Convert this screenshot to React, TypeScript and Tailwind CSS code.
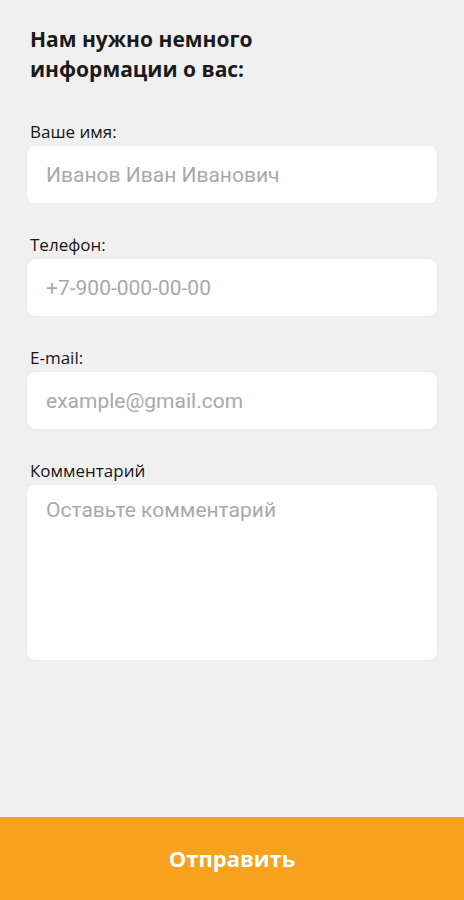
import { ReactNode } from "react";

function Field({ label, children }: { label: string; children: ReactNode }) {
  return (
    <div className="flex flex-col">
      <label className="pl-[3px] text-[17px] leading-[20px] font-medium text-[#161616] mb-[4px]">{label}</label>
      {children}
    </div>
  );
}

const inputCls =
  "w-full h-[57px] rounded-[8px] bg-white px-[19px] text-[21px] text-[#333] placeholder:text-[#a9a9a9] outline-none shadow-[0_0_2px_rgba(0,0,0,0.06)] font-['Roboto',sans-serif]";

export default function App() {
  return (
    <div className="min-h-screen flex flex-col bg-[#f0f0f0] font-['Open_Sans',sans-serif]">
      <main className="flex-1 px-[27px] pt-[24px]">
        <h1 className="text-[21px] leading-[30px] font-bold text-[#1a1a1a] mb-[38px] pl-[3px]">
          Нам нужно немного
          <br />
          информации о вас:
        </h1>

        <div className="flex flex-col gap-[32px]">
          <Field label="Ваше имя:">
            <input className={inputCls} placeholder="Иванов Иван Иванович" />
          </Field>
          <Field label="Телефон:">
            <input className={inputCls} placeholder="+7-900-000-00-00" />
          </Field>
          <Field label="E-mail:">
            <input className={inputCls} placeholder="example@gmail.com" />
          </Field>
          <Field label="Комментарий">
            <textarea
              className="w-full h-[175px] resize-none rounded-[8px] bg-white px-[19px] pt-[10px] text-[21px] leading-[30px] text-[#333] placeholder:text-[#a9a9a9] outline-none shadow-[0_0_2px_rgba(0,0,0,0.06)] font-['Roboto',sans-serif]"
              placeholder="Оставьте комментарий"
            />
          </Field>
        </div>
      </main>

      <button className="h-[83px] w-full bg-[#f8a11c] text-white text-[22px] font-bold">
        Отправить
      </button>
    </div>
  );
}
